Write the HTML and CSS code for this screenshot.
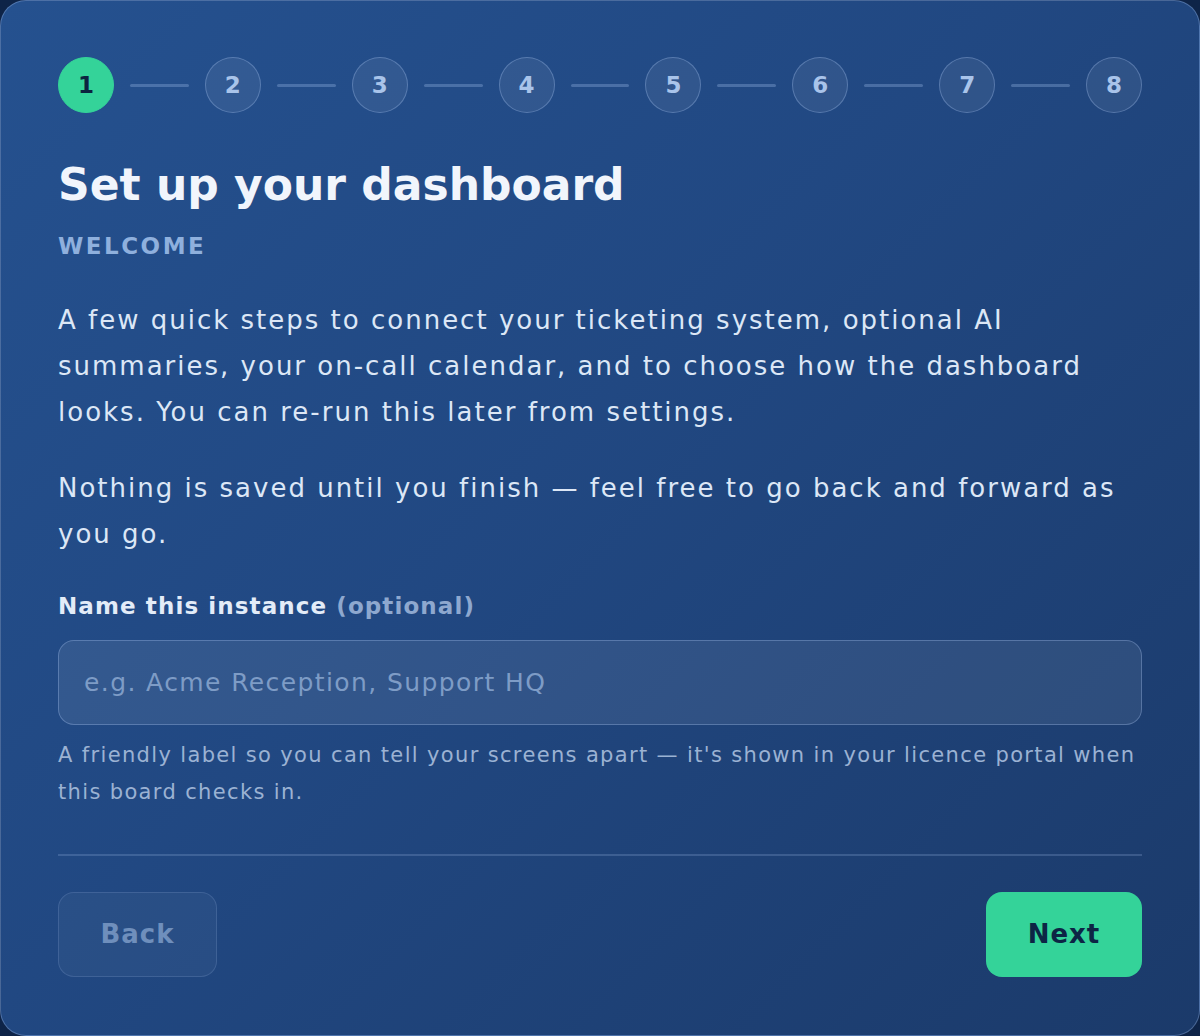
FILE: index.html
```html
<!DOCTYPE html>
<html lang="en">
<head>
<meta charset="utf-8">
<title>Set up your dashboard</title>
<link rel="stylesheet" href="styles.css">
</head>
<body>
<div class="card">
  <div class="stepper">
    <div class="step active">1</div><div class="line"></div>
    <div class="step">2</div><div class="line"></div>
    <div class="step">3</div><div class="line"></div>
    <div class="step">4</div><div class="line"></div>
    <div class="step">5</div><div class="line"></div>
    <div class="step">6</div><div class="line"></div>
    <div class="step">7</div><div class="line"></div>
    <div class="step">8</div>
  </div>
  <h1 class="title">Set up your dashboard</h1>
  <div class="eyebrow">WELCOME</div>
  <p class="body-text">A few quick steps to connect your ticketing system, optional AI summaries, your on-call calendar, and to choose how the dashboard looks. You can re-run this later from settings.</p>
  <p class="body-text second">Nothing is saved until you finish — feel free to go back and forward as you go.</p>
  <label class="field-label" for="inst">Name this instance <span class="opt">(optional)</span></label>
  <input class="field-input" id="inst" type="text" placeholder="e.g. Acme Reception, Support HQ">
  <p class="help">A friendly label so you can tell your screens apart — it's shown in your licence portal when this board checks in.</p>
  <div class="divider"></div>
  <div class="actions">
    <button class="btn back" disabled>Back</button>
    <button class="btn next">Next</button>
  </div>
</div>
</body>
</html>
```
FILE: styles.css
```css
html, body {
  margin: 0;
  padding: 0;
  height: 100%;
}
body {
  background: #0e2448;
  font-family: "DejaVu Sans", "Open Sans", sans-serif;
}
.card {
  box-sizing: border-box;
  height: 100vh;
  border: 1px solid rgba(160, 190, 235, 0.35);
  border-radius: 26px;
  background: linear-gradient(135deg, #25518f 0%, #214882 45%, #1b3a6a 100%);
  padding: 56px 57px 0 57px;
}
.stepper {
  display: flex;
  align-items: center;
}
.step {
  box-sizing: border-box;
  width: 56px;
  height: 56px;
  border-radius: 50%;
  border: 1.5px solid rgba(160, 190, 235, 0.35);
  background: rgba(255, 255, 255, 0.07);
  color: #a9c4ea;
  font-weight: 700;
  font-size: 23px;
  display: flex;
  align-items: center;
  justify-content: center;
  flex: none;
}
.step.active {
  background: #34d399;
  border-color: #34d399;
  color: #0c2340;
}
.line {
  flex: 1;
  height: 3px;
  margin: 0 16px;
  border-radius: 2px;
  background: rgba(150, 180, 225, 0.35);
}
.title {
  margin: 42px 0 0 0;
  font-size: 44px;
  line-height: 60px;
  font-weight: 700;
  color: #f1f5fc;
  letter-spacing: 0;
}
.eyebrow {
  margin-top: 17px;
  font-size: 23px;
  font-weight: 700;
  letter-spacing: 2.5px;
  color: #8fb0dd;
  line-height: 28px;
}
.body-text {
  margin: 37px 0 0 0;
  font-size: 26px;
  line-height: 46px;
  letter-spacing: 2px;
  color: #dce7f6;
}
.body-text.second {
  margin-top: 30px;
}
.field-label {
  display: block;
  margin-top: 33px;
  font-size: 23px;
  line-height: 32px;
  font-weight: 700;
  letter-spacing: 1.1px;
  color: #e3ecf8;
}
.opt {
  font-weight: 700;
  color: #8ea8cf;
}
.field-input {
  display: block;
  box-sizing: border-box;
  width: 100%;
  height: 85px;
  margin-top: 18px;
  padding: 0 25px;
  border-radius: 16px;
  border: 1.5px solid rgba(160, 190, 235, 0.35);
  background: rgba(255, 255, 255, 0.08);
  font-family: inherit;
  font-size: 25px;
  letter-spacing: 1.4px;
  color: #e3ecf8;
  outline: none;
}
.field-input::placeholder {
  color: #7e9cc6;
}
.help {
  margin: 12px 0 0 0;
  font-size: 21px;
  line-height: 37px;
  letter-spacing: 1.35px;
  color: #9bb2d3;
}
.divider {
  margin-top: 43px;
  height: 1.5px;
  background: rgba(150, 180, 225, 0.25);
}
.actions {
  margin-top: 36px;
  display: flex;
  justify-content: space-between;
}
.btn {
  box-sizing: border-box;
  height: 85px;
  border-radius: 16px;
  font-family: inherit;
  font-size: 26px;
  font-weight: 700;
  letter-spacing: 1px;
  padding: 0;
}
.btn.back {
  width: 159px;
  background: rgba(255, 255, 255, 0.04);
  border: 1.5px solid rgba(160, 190, 235, 0.18);
  color: #6f8fbc;
}
.btn.next {
  width: 156px;
  background: #34d399;
  border: none;
  color: #0d2545;
}
```
